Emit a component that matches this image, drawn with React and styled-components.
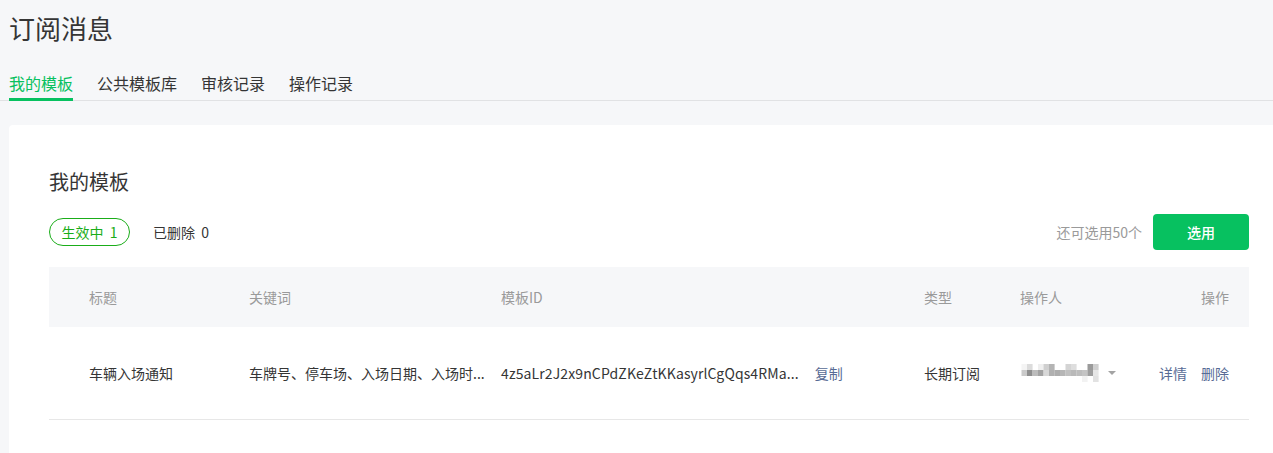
import React from 'react'
import styled, { createGlobalStyle } from 'styled-components'

const GlobalStyle = createGlobalStyle`
    html, body {
        margin: 0;
        padding: 0;
        background: #f6f7f9;
        font-family: "Noto Sans CJK SC", "Noto Sans", sans-serif;
        color: #353535;
        overflow: hidden;
    }
`

const tabs = ['我的模板', '公共模板库', '审核记录', '操作记录']

const columns = [
    { key: 'title', label: '标题' },
    { key: 'keywords', label: '关键词' },
    { key: 'id', label: '模板ID' },
    { key: 'type', label: '类型' },
    { key: 'operator', label: '操作人' },
    { key: 'actions', label: '操作' },
]

// mosaic blocks that stand in for the blurred operator name
const mosaic = [
    [1, 0, '#f4f4f4'], [2, 0, '#dcdcdc'], [4, 0, '#efefef'], [5, 0, '#cfcfcf'], [6, 0, '#b4b4b4'],
    [9, 0, '#d4d4d4'], [10, 0, '#dedede'], [13, 0, '#9a9a9a'], [14, 0, '#cfcfcf'],
    [1, 1, '#cacaca'], [2, 1, '#8f8f8f'], [3, 1, '#bcbcbc'], [4, 1, '#a3a3a3'], [5, 1, '#d8d8d8'],
    [6, 1, '#b0b0b0'], [7, 1, '#adadad'], [8, 1, '#b6b6b6'], [9, 1, '#c0c0c0'], [10, 1, '#b9b9b9'],
    [11, 1, '#bdbdbd'], [12, 1, '#c4c4c4'], [13, 1, '#9e9e9e'], [14, 1, '#e6e6e6'],
    [12, 2, '#f2f2f2'], [14, 2, '#e2e2e2'],
]

function Mosaic() {
    return (
        <svg width="84" height="18" viewBox="0 0 84 18" style={{ marginLeft: -4 }}>
            {mosaic.map(([x, y, c]) => (
                <rect key={`${x}-${y}`} x={x * 5.5} y={y * 6} width="5.6" height="6" fill={c} />
            ))}
        </svg>
    )
}

function App() {
    return (
        <Page>
            <GlobalStyle />
            <PageTitle>订阅消息</PageTitle>
            <TabBar>
                {tabs.map((t, i) => (
                    <Tab key={t} active={i === 0}>{t}</Tab>
                ))}
            </TabBar>

            <Card>
                <CardTitle>我的模板</CardTitle>
                <Toolbar>
                    <Filters>
                        <Pill>生效中&nbsp;&nbsp;1</Pill>
                        <FilterText>已删除&nbsp;&nbsp;0</FilterText>
                    </Filters>
                    <Actions>
                        <Remaining>还可选用50个</Remaining>
                        <PrimaryButton>选用</PrimaryButton>
                    </Actions>
                </Toolbar>

                <Table>
                    <HeadRow>
                        {columns.map(c => (
                            <Cell key={c.key} col={c.key}>{c.label}</Cell>
                        ))}
                    </HeadRow>
                    <BodyRow>
                        <Cell col="title">车辆入场通知</Cell>
                        <Cell col="keywords">车牌号、停车场、入场日期、入场时...</Cell>
                        <Cell col="id">
                            <IdText>4z5aLr2J2x9nCPdZKeZtKKasyrlCgQqs4RMa...</IdText>
                            <Link>复制</Link>
                        </Cell>
                        <Cell col="type">长期订阅</Cell>
                        <Cell col="operator">
                            <Mosaic />
                            <Caret />
                        </Cell>
                        <Cell col="actions">
                            <Link>详情</Link>
                            <Link>删除</Link>
                        </Cell>
                    </BodyRow>
                </Table>
            </Card>
        </Page>
    )
}

const Page = styled.div`
    padding-left: 9px;
    height: 453px;
    box-sizing: border-box;
    overflow: hidden;
`

const PageTitle = styled.h1`
    margin: 10px 0 25px;
    font-size: 26px;
    line-height: 36px;
    font-weight: 400;
    color: #353535;
`

const TabBar = styled.div`
    display: flex;
    gap: 24px;
    margin-left: -9px;
    padding-left: 9px;
    border-bottom: 1px solid #e1e2e4;
`

const Tab = styled.div`
    position: relative;
    font-size: 16px;
    line-height: 24px;
    padding-bottom: 5px;
    color: ${p => (p.active ? '#07c160' : '#353535')};

    &::after {
        content: '';
        display: ${p => (p.active ? 'block' : 'none')};
        position: absolute;
        left: 0;
        right: 0;
        bottom: -1px;
        height: 3px;
        background: #07c160;
    }
`

const Card = styled.div`
    margin-top: 24px;
    background: #fff;
    border-radius: 4px 0 0 0;
    padding: 40px 24px 0 40px;
    height: 328px;
    box-sizing: border-box;
`

const CardTitle = styled.h2`
    margin: 0 0 15px;
    font-size: 20px;
    line-height: 34px;
    font-weight: 400;
    color: #353535;
`

const Toolbar = styled.div`
    display: flex;
    align-items: center;
    justify-content: space-between;
    height: 36px;
    margin-bottom: 17px;
`

const Filters = styled.div`
    display: flex;
    align-items: center;
    gap: 23px;
`

const Pill = styled.div`
    box-sizing: border-box;
    height: 28px;
    width: 81px;
    display: flex;
    align-items: center;
    justify-content: center;
    border: 1px solid #1aad19;
    border-radius: 14px;
    color: #1aad19;
    font-size: 14px;
`

const FilterText = styled.span`
    font-size: 14px;
    color: #353535;
`

const Actions = styled.div`
    display: flex;
    align-items: center;
    gap: 11px;
`

const Remaining = styled.span`
    font-size: 14px;
    color: #9a9a9a;
`

const PrimaryButton = styled.button`
    width: 96px;
    height: 36px;
    border: none;
    border-radius: 4px;
    background: #07c160;
    color: #fff;
    font-family: inherit;
    font-size: 14px;
    font-weight: 500;
`

const Table = styled.div`
    width: 100%;
`

const rowGrid = `
    display: grid;
    grid-template-columns: 200px 252px 423px 96px 1fr 120px;
    align-items: center;
`

const HeadRow = styled.div`
    ${rowGrid}
    height: 60px;
    background: #f6f7f9;
    color: #9a9a9a;
    font-size: 14px;
`

const BodyRow = styled.div`
    ${rowGrid}
    height: 92px;
    border-bottom: 1px solid #e7e7e7;
    color: #353535;
    font-size: 14px;
`

const Cell = styled.div`
    display: flex;
    align-items: center;
    white-space: nowrap;
    padding-left: ${p => (p.col === 'title' ? '40px' : '0')};
    padding-right: ${p => (p.col === 'actions' ? '20px' : '0')};
    justify-content: ${p => (p.col === 'actions' ? 'flex-end' : 'flex-start')};
    gap: ${p => (p.col === 'actions' ? '14px' : p.col === 'id' ? '16px' : '6px')};
`

const IdText = styled.span`
    color: #353535;
    letter-spacing: 0.12px;
`

const Link = styled.a`
    color: #576b95;
    cursor: pointer;
`

const Caret = styled.span`
    width: 0;
    height: 0;
    border-left: 4px solid transparent;
    border-right: 4px solid transparent;
    border-top: 4px solid #a3a3a3;
    margin-left: 2px;
`

export default App
